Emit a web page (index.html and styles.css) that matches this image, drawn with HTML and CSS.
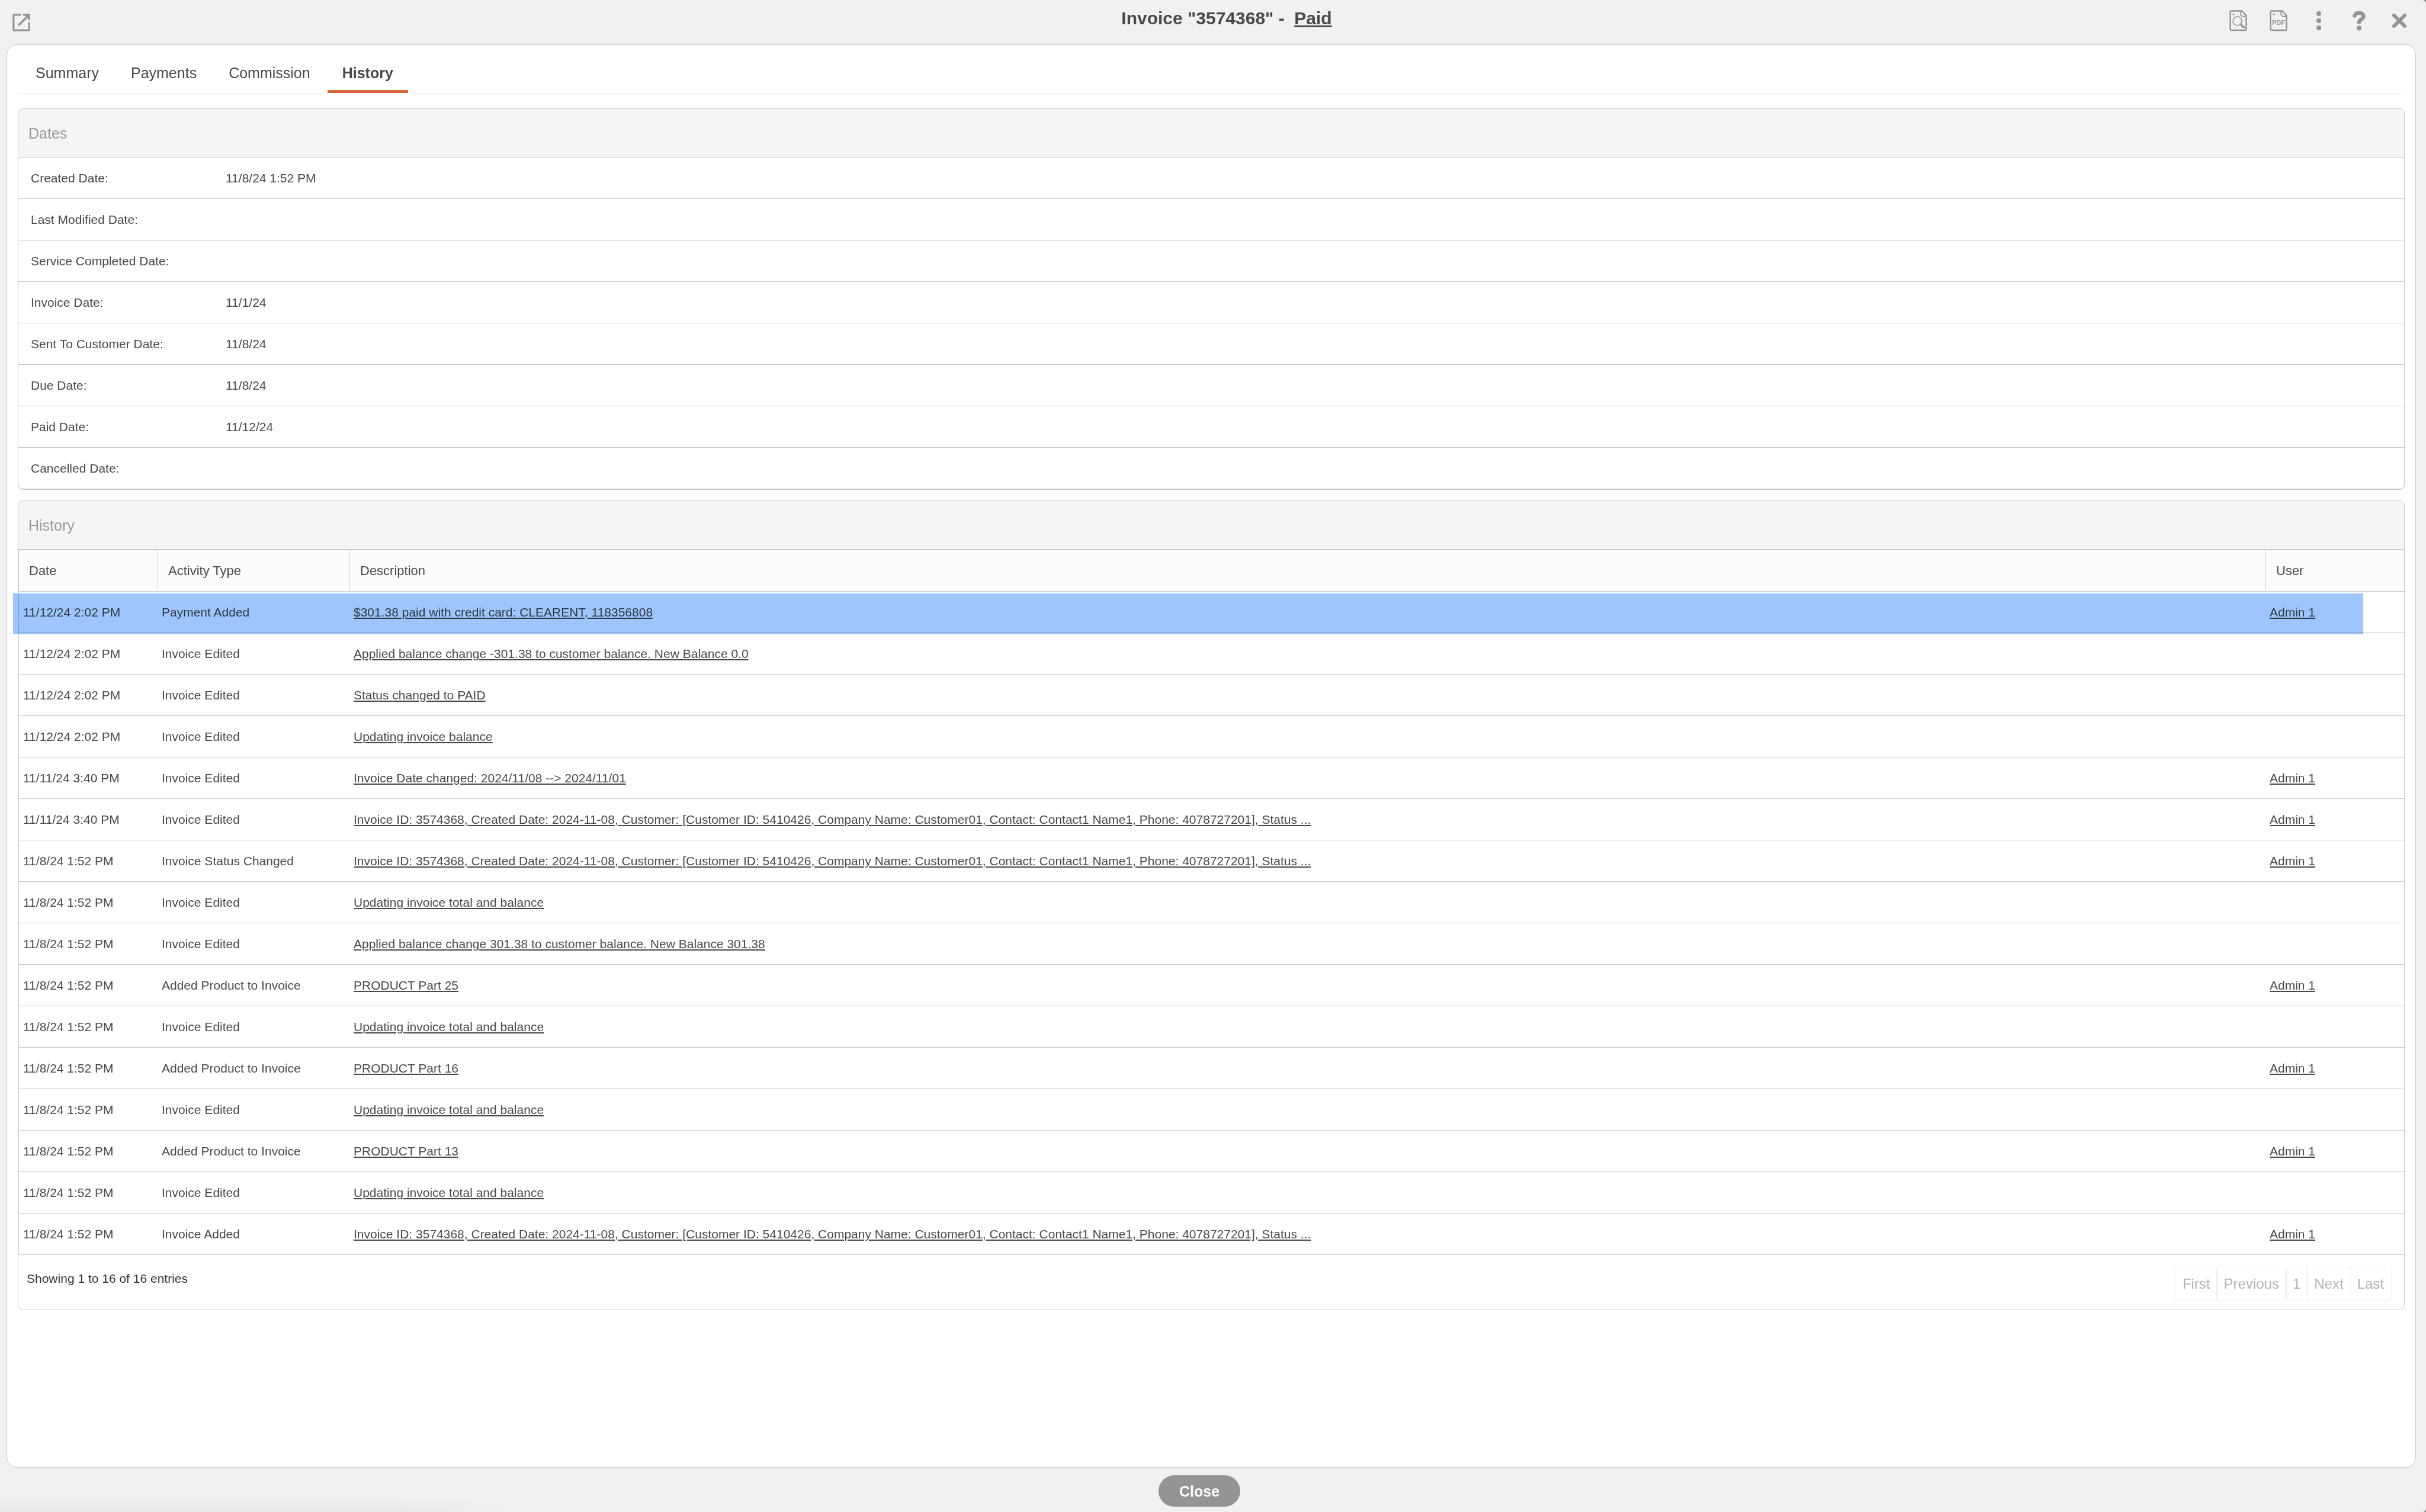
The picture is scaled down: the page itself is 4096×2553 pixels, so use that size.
FILE: index.html
```html
<!DOCTYPE html>
<html lang="en">
<head>
<meta charset="utf-8">
<title>Invoice "3574368" - Paid</title>
<link rel="stylesheet" href="styles.css">
</head>
<body>
<div class="dialog">
  <header class="dialog-header">
    <div class="header-start">
      <button class="icon-button popout" type="button" aria-label="Open in new window">
        <svg width="30" height="30" viewBox="0 0 30 30" fill="none" stroke="#959393" stroke-width="3.2">
          <path d="M14.5 1.8H3Q1.8 1.8 1.8 3V27Q1.8 28.2 3 28.2H27Q28.2 28.2 28.2 27V14.5"/>
          <path d="M18 1.8H28.2V10.8"/>
          <path d="M11 19L26.5 3.5" stroke-width="3.4" stroke-linecap="round"/>
          <path d="M20 2L28 10V2Z" fill="#959393" stroke="none"/>
        </svg>
      </button>
    </div>
    <h1 class="dialog-title">Invoice "3574368" - &nbsp;<a href="#status">Paid</a></h1>
    <div class="header-actions">
      <button class="icon-button" type="button" aria-label="Preview">
        <svg width="30" height="36" viewBox="0 0 30 36" fill="none" stroke="#959393">
          <path d="M3.5 1.5H21L28.5 9V31.5Q28.5 34 26 34H4Q1.5 34 1.5 31.5V3.5Q1.5 1.5 3.5 1.5Z" stroke-width="2.4" stroke-linejoin="round"/>
          <path d="M20.5 2Q17.5 6 20.5 9.5Q24 12.5 28 9.5" stroke-width="1.8"/>
          <circle cx="7" cy="7" r="1.6" fill="#959393" stroke="none"/>
          <circle cx="13.5" cy="18.5" r="7.5" stroke-width="1.6"/>
          <path d="M19 24L20.5 25.5" stroke-width="2"/>
          <path d="M20.5 25.5L24.500 29.3" stroke-width="3.6" stroke-linecap="round"/>
        </svg>
      </button>
      <button class="icon-button" type="button" aria-label="Download as PDF">
        <svg width="30" height="36" viewBox="0 0 30 36" fill="none" stroke="#959393">
          <path d="M3.5 1.5H21L28.5 9V31.5Q28.5 34 26 34H4Q1.5 34 1.5 31.5V3.5Q1.5 1.5 3.5 1.5Z" stroke-width="2.4" stroke-linejoin="round"/>
          <path d="M20.5 2Q17.5 6 20.5 9.5Q24 12.5 28 9.5" stroke-width="1.8"/>
          <circle cx="7" cy="7" r="1.6" fill="#959393" stroke="none"/>
          <text class="pdf-label" x="15" y="25" text-anchor="middle">PDF</text>
        </svg>
      </button>
      <button class="icon-button" type="button" aria-label="More actions">
        <svg width="30" height="36" viewBox="0 0 30 36" fill="#959393">
          <circle cx="15" cy="6" r="4"/><circle cx="15" cy="18" r="4"/><circle cx="15" cy="30" r="4"/>
        </svg>
      </button>
      <button class="icon-button" type="button" aria-label="Help">
        <svg width="30" height="36" viewBox="0 0 30 36" fill="none" stroke="#959393">
          <path d="M7.5 9.5C8.5 6 11.5 4.8 15 4.8C19.5 4.8 22.5 7 22.5 11C22.5 15.5 15 15.5 15 20.5" stroke-width="6.5" stroke-linecap="round"/>
          <circle cx="15" cy="30.5" r="4" fill="#959393" stroke="none"/>
        </svg>
      </button>
      <button class="icon-button" type="button" aria-label="Close window">
        <svg width="30" height="36" viewBox="0 0 30 36" fill="none" stroke="#959393" stroke-width="6" stroke-linecap="round">
          <path d="M6 9L24 27M24 9L6 27"/>
        </svg>
      </button>
    </div>
  </header>

  <main class="panel">
    <nav class="tabs">
      <button class="tab" type="button">Summary</button>
      <button class="tab" type="button">Payments</button>
      <button class="tab" type="button">Commission</button>
      <button class="tab tab-active" type="button" aria-current="page">History</button>
    </nav>

    <section class="card">
      <h2 class="card-title">Dates</h2>
      <dl class="dates">
        <div class="date-row"><dt>Created Date:</dt><dd>11/8/24 1:52 PM</dd></div>
        <div class="date-row"><dt>Last Modified Date:</dt><dd></dd></div>
        <div class="date-row"><dt>Service Completed Date:</dt><dd></dd></div>
        <div class="date-row"><dt>Invoice Date:</dt><dd>11/1/24</dd></div>
        <div class="date-row"><dt>Sent To Customer Date:</dt><dd>11/8/24</dd></div>
        <div class="date-row"><dt>Due Date:</dt><dd>11/8/24</dd></div>
        <div class="date-row"><dt>Paid Date:</dt><dd>11/12/24</dd></div>
        <div class="date-row"><dt>Cancelled Date:</dt><dd></dd></div>
      </dl>
    </section>

    <section class="card">
      <h2 class="card-title">History</h2>
      <table class="history">
        <thead>
          <tr><th>Date</th><th>Activity Type</th><th>Description</th><th>User</th></tr>
        </thead>
        <tbody>
          <tr class="selected"><td>11/12/24 2:02 PM</td><td>Payment Added</td><td><a href="#d1">$301.38 paid with credit card: CLEARENT, 118356808</a></td><td><a href="#u">Admin 1</a></td></tr>
          <tr><td>11/12/24 2:02 PM</td><td>Invoice Edited</td><td><a href="#d2">Applied balance change -301.38 to customer balance. New Balance 0.0</a></td><td></td></tr>
          <tr><td>11/12/24 2:02 PM</td><td>Invoice Edited</td><td><a href="#d3">Status changed to PAID</a></td><td></td></tr>
          <tr><td>11/12/24 2:02 PM</td><td>Invoice Edited</td><td><a href="#d4">Updating invoice balance</a></td><td></td></tr>
          <tr><td>11/11/24 3:40 PM</td><td>Invoice Edited</td><td><a href="#d5">Invoice Date changed: 2024/11/08 --&gt; 2024/11/01</a></td><td><a href="#u">Admin 1</a></td></tr>
          <tr><td>11/11/24 3:40 PM</td><td>Invoice Edited</td><td><a href="#d6">Invoice ID: 3574368, Created Date: 2024-11-08, Customer: [Customer ID: 5410426, Company Name: Customer01, Contact: Contact1 Name1, Phone: 4078727201], Status ...</a></td><td><a href="#u">Admin 1</a></td></tr>
          <tr><td>11/8/24 1:52 PM</td><td>Invoice Status Changed</td><td><a href="#d7">Invoice ID: 3574368, Created Date: 2024-11-08, Customer: [Customer ID: 5410426, Company Name: Customer01, Contact: Contact1 Name1, Phone: 4078727201], Status ...</a></td><td><a href="#u">Admin 1</a></td></tr>
          <tr><td>11/8/24 1:52 PM</td><td>Invoice Edited</td><td><a href="#d8">Updating invoice total and balance</a></td><td></td></tr>
          <tr><td>11/8/24 1:52 PM</td><td>Invoice Edited</td><td><a href="#d9">Applied balance change 301.38 to customer balance. New Balance 301.38</a></td><td></td></tr>
          <tr><td>11/8/24 1:52 PM</td><td>Added Product to Invoice</td><td><a href="#d10">PRODUCT Part 25</a></td><td><a href="#u">Admin 1</a></td></tr>
          <tr><td>11/8/24 1:52 PM</td><td>Invoice Edited</td><td><a href="#d11">Updating invoice total and balance</a></td><td></td></tr>
          <tr><td>11/8/24 1:52 PM</td><td>Added Product to Invoice</td><td><a href="#d12">PRODUCT Part 16</a></td><td><a href="#u">Admin 1</a></td></tr>
          <tr><td>11/8/24 1:52 PM</td><td>Invoice Edited</td><td><a href="#d13">Updating invoice total and balance</a></td><td></td></tr>
          <tr><td>11/8/24 1:52 PM</td><td>Added Product to Invoice</td><td><a href="#d14">PRODUCT Part 13</a></td><td><a href="#u">Admin 1</a></td></tr>
          <tr><td>11/8/24 1:52 PM</td><td>Invoice Edited</td><td><a href="#d15">Updating invoice total and balance</a></td><td></td></tr>
          <tr><td>11/8/24 1:52 PM</td><td>Invoice Added</td><td><a href="#d16">Invoice ID: 3574368, Created Date: 2024-11-08, Customer: [Customer ID: 5410426, Company Name: Customer01, Contact: Contact1 Name1, Phone: 4078727201], Status ...</a></td><td><a href="#u">Admin 1</a></td></tr>
        </tbody>
      </table>
      <div class="table-footer">
        <p class="entries">Showing 1 to 16 of 16 entries</p>
        <nav class="pagination" aria-label="Pages">
          <button type="button">First</button>
          <button type="button">Previous</button>
          <button type="button">1</button>
          <button type="button">Next</button>
          <button type="button">Last</button>
        </nav>
      </div>
    </section>
  </main>

  <footer class="dialog-footer">
    <button class="close-button" type="button">Close</button>
  </footer>
</div>
</body>
</html>
```
FILE: styles.css
```css
* {
  box-sizing: border-box;
}

body {
  margin: 0;
  background: #777;
  color: #484848;
  font-family: "Liberation Sans", Arial, sans-serif;
  font-size: 21px;
  line-height: 30px;
}

h1, h2, p, dl, dd {
  margin: 0;
}

button {
  margin: 0;
  padding: 0;
  border: 0;
  background: none;
  color: inherit;
  font: inherit;
}

a {
  color: inherit;
  text-decoration-line: underline;
  text-decoration-thickness: 2px;
  text-underline-offset: 2px;
}

.dialog {
  position: relative;
  display: flex;
  flex-direction: column;
  min-height: 100vh;
  border-radius: 0 6px 6px 0;
  background: #f1f1f1;
}

/* soft shadow along the lower left edge */
.dialog::after {
  content: "";
  position: absolute;
  left: 0;
  bottom: 0;
  width: 22%;
  height: 24px;
  background: linear-gradient(to bottom, rgba(0, 0, 0, 0), rgba(0, 0, 0, 0.04));
  -webkit-mask-image: linear-gradient(to right, #000 70%, transparent);
  mask-image: linear-gradient(to right, #000 70%, transparent);
  pointer-events: none;
}

.dialog-header {
  display: grid;
  grid-template-columns: 1fr auto 1fr;
  height: 75px;
  padding-right: 11px;
}

.header-start {
  display: flex;
  padding-left: 2px;
  padding-top: 3px;
}

.header-actions {
  display: flex;
  justify-content: flex-end;
}

.icon-button {
  display: flex;
  align-items: center;
  justify-content: center;
  width: 68px;
  height: 70px;
}

.pdf-label {
  fill: #959393;
  stroke: none;
  font-size: 11px;
  font-weight: 700;
}

.dialog-title {
  padding: 11px 0 0 57px;
  font-size: 30px;
  line-height: 40px;
}

.dialog-title a {
  text-decoration-thickness: 3px;
}

.panel {
  flex: 1;
  margin: 0 17px 0 11px;
  padding: 0 18px;
  border: 1px solid #c6c6c6;
  border-radius: 17px;
  background: #fff;
}

.tabs {
  display: flex;
  gap: 4px;
  height: 83px;
  margin-bottom: 24px;
  padding-left: 5px;
  border-bottom: 1px solid #e6e6e6;
}

.tab {
  padding: 12px 25px 0;
  font-size: 25px;
}

.tab-active {
  margin-bottom: -1px;
  border-bottom: 2px solid #fff;
  background: #fff;
  box-shadow: inset 0 -5px 0 #d9653b;
  font-weight: 700;
}

.card {
  margin-bottom: 18px;
  border: 1px solid #c8c8c8;
  border-radius: 8px;
}

.card-title {
  height: 82px;
  padding-left: 17px;
  border-bottom: 1px solid #c8c8c8;
  border-radius: 7px 7px 0 0;
  background: #f5f5f5;
  color: #999;
  font-size: 25px;
  font-weight: 400;
  line-height: 82px;
}

.date-row {
  display: grid;
  grid-template-columns: 329px 1fr;
  height: 70px;
  padding-left: 21px;
  border-bottom: 1px solid #c8c8c8;
  line-height: 69px;
}

.date-row:last-child {
  border-radius: 0 0 7px 7px;
}

.history,
.history thead,
.history tbody {
  display: block;
}

.history {
  border-top: 1px solid #c8c8c8;
}

.history tr {
  display: grid;
  grid-template-columns: 235px 324px 1fr 234px;
}

.history th,
.history td {
  height: 70px;
  padding: 0 0 0 7px;
  border-bottom: 1px solid #c8c8c8;
  line-height: 69px;
  text-align: left;
  white-space: nowrap;
}

.history th {
  padding-left: 17px;
  border-left: 1px solid #d0d0d0;
  background: #fcfcfc;
  font-size: 22px;
  font-weight: 400;
}

.history td:first-child {
  border-left: 1px solid #dcdcdc;
}

.history .selected {
  position: relative;
}

/* highlight band laid over the selected row and its rules */
.selected::after {
  content: "";
  position: absolute;
  top: 3px;
  right: 69px;
  bottom: -2px;
  left: -9px;
  background: #9fc6fc;
  mix-blend-mode: multiply;
  pointer-events: none;
}

.table-footer {
  display: flex;
  justify-content: space-between;
  align-items: flex-start;
  height: 91px;
  padding: 20px 21px 0 14px;
}

.entries {
  padding-top: 5px;
  color: #333;
}

.pagination {
  display: flex;
}

.pagination button {
  height: 57px;
  padding: 0 12px;
  border: 1px solid #efefef;
  border-radius: 5px;
  color: #b4b4b4;
  font-size: 24px;
}

.pagination button + button {
  margin-left: -3px;
}

.dialog-footer {
  display: flex;
  justify-content: center;
  align-items: center;
  height: 75px;
  padding: 4px 46px 0 0;
}

.close-button {
  height: 53px;
  padding: 0 35px;
  border-radius: 27px;
  background: #959393;
  color: #fff;
  font-size: 25px;
  font-weight: 700;
}
```
